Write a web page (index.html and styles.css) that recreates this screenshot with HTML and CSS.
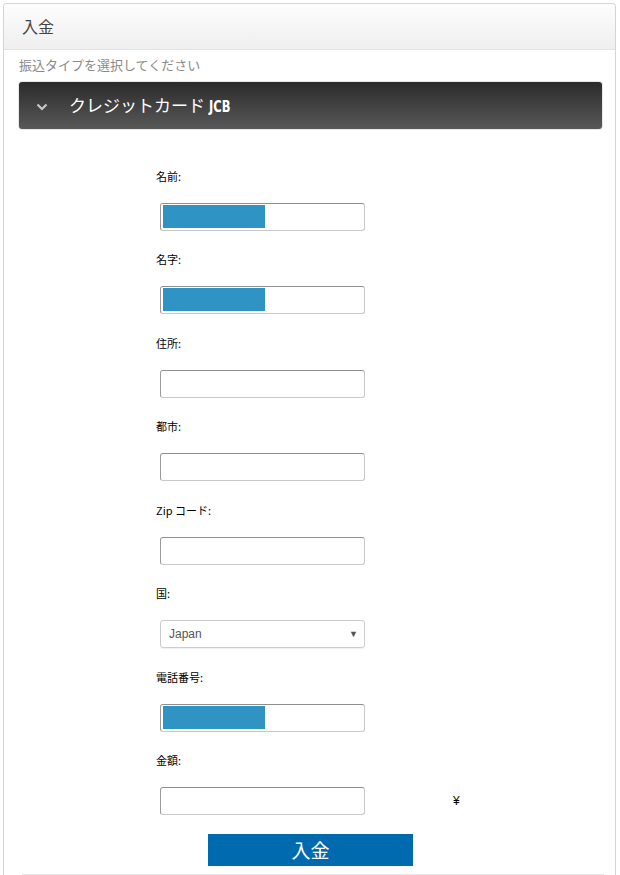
FILE: index.html
```html
<!DOCTYPE html>
<html lang="ja">
<head>
<meta charset="utf-8">
<title>入金</title>
<link rel="stylesheet" href="styles.css">
</head>
<body>
<div class="panel">
  <div class="panel-head">入金</div>
  <div class="panel-body">
    <div class="hint">振込タイプを選択してください</div>
    <div class="type-bar">
      <svg class="chev" width="12" height="8" viewBox="0 0 12 8"><path d="M1.5 1.5 L6 6 L10.5 1.5" fill="none" stroke="#c8c8c8" stroke-width="2.2"/></svg>
      <span class="type-name">クレジットカード <b class="jcb">JCB</b></span>
    </div>
    <form class="form">
      <div class="row"><label class="lbl">名前:</label><div class="field"><span class="fill"></span></div></div>
      <div class="row"><label class="lbl">名字:</label><div class="field"><span class="fill"></span></div></div>
      <div class="row"><label class="lbl">住所:</label><div class="field"></div></div>
      <div class="row"><label class="lbl">都市:</label><div class="field"></div></div>
      <div class="row"><label class="lbl">Zip コード:</label><div class="field"></div></div>
      <div class="row"><label class="lbl">国:</label><div class="select"><span>Japan</span><span class="arrow">▼</span></div></div>
      <div class="row"><label class="lbl">電話番号:</label><div class="field"><span class="fill"></span></div></div>
      <div class="row last"><label class="lbl">金額:</label><div class="amount"><div class="field"></div><span class="yen">¥</span></div></div>
      <div class="btn-wrap"><button type="button" class="btn">入金</button></div>
    </form>
    <div class="rule"></div>
  </div>
</div>
</body>
</html>
```
FILE: styles.css
```css
* { box-sizing: border-box; }
html, body { margin: 0; padding: 0; background: #fff; }
body { font-family: "Noto Sans CJK JP", "Liberation Sans", sans-serif; color: #000; }

.panel {
  margin: 3px 4px 0 3px;
  border: 1px solid #d4d4d4;
  border-bottom: none;
  border-radius: 4px 4px 0 0;
  height: 872px;
  overflow: hidden;
}
.panel-head {
  height: 46px;
  padding-left: 18px;
  border-bottom: 1px solid #e2e2e2;
  background: linear-gradient(#fdfdfd, #efefef);
  font-size: 16px;
  line-height: 45px;
  color: #444;
}
.panel-body { padding: 0 13px 0 15px; }
.hint {
  font-size: 13px;
  line-height: 18px;
  color: #8a8a8a;
  padding-top: 6px;
  height: 32px;
}
.type-bar {
  height: 47px;
  border-radius: 3px;
  background: linear-gradient(#2b2b2b, #585858);
  display: flex;
  align-items: center;
  padding-left: 17px;
  box-shadow: 0 0 0 1px #e8e8e8;
}
.chev { margin-right: 21px; margin-top: 2px; }
.type-name { color: #fff; font-size: 17px; line-height: 20px; }
.jcb {
  display: inline-block;
  font-family: "DejaVu Sans", "Liberation Sans", sans-serif;
  font-weight: bold;
  font-size: 16px;
  transform: scaleX(0.72);
  transform-origin: left center;
}

.form { padding-left: 137px; padding-top: 39px; }
.row { display: flex; flex-direction: column; align-items: flex-start; margin-bottom: 20.45px; }
.row.last { margin-bottom: 19px; }
.lbl { font-size: 11px; line-height: 16px; height: 16px; margin-bottom: 19px; }
.field {
  margin-left: 4px;
  width: 205px;
  height: 28px;
  border: 1px solid #c8c8c8;
  border-top-color: #8f8f8f;
  border-left-color: #9a9a9a;
  border-radius: 3px;
  padding: 1px 2px;
  background: #fff;
}
.fill { display: block; width: 102px; height: 23px; background: #2f93c4; }
.select {
  margin-left: 4px;
  width: 205px;
  height: 28px;
  border: 1px solid #cccccc;
  border-radius: 3px;
  box-shadow: 0 1px 1px rgba(0,0,0,0.06);
  display: flex;
  align-items: center;
  justify-content: space-between;
  padding: 0 6px 0 8px;
  font-family: "Liberation Sans", sans-serif;
  font-size: 12px;
  color: #555;
}
.arrow { font-size: 9px; color: #555; }
.amount { display: flex; align-items: center; }
.yen { margin-left: 88px; font-size: 12px; font-family: "Liberation Sans", sans-serif; }
.btn-wrap { margin-left: -137px; display: flex; justify-content: center; }
.btn {
  width: 205px;
  height: 32px;
  border: none;
  background: #006aaf;
  color: #fff;
  font-family: "Noto Sans CJK JP", sans-serif;
  font-size: 19px;
  line-height: 32px;
  padding: 0;
}
.rule { margin-top: 8px; height: 2px; background: #e6e6e6; margin-left: 3px; margin-right: -2px; }
```
